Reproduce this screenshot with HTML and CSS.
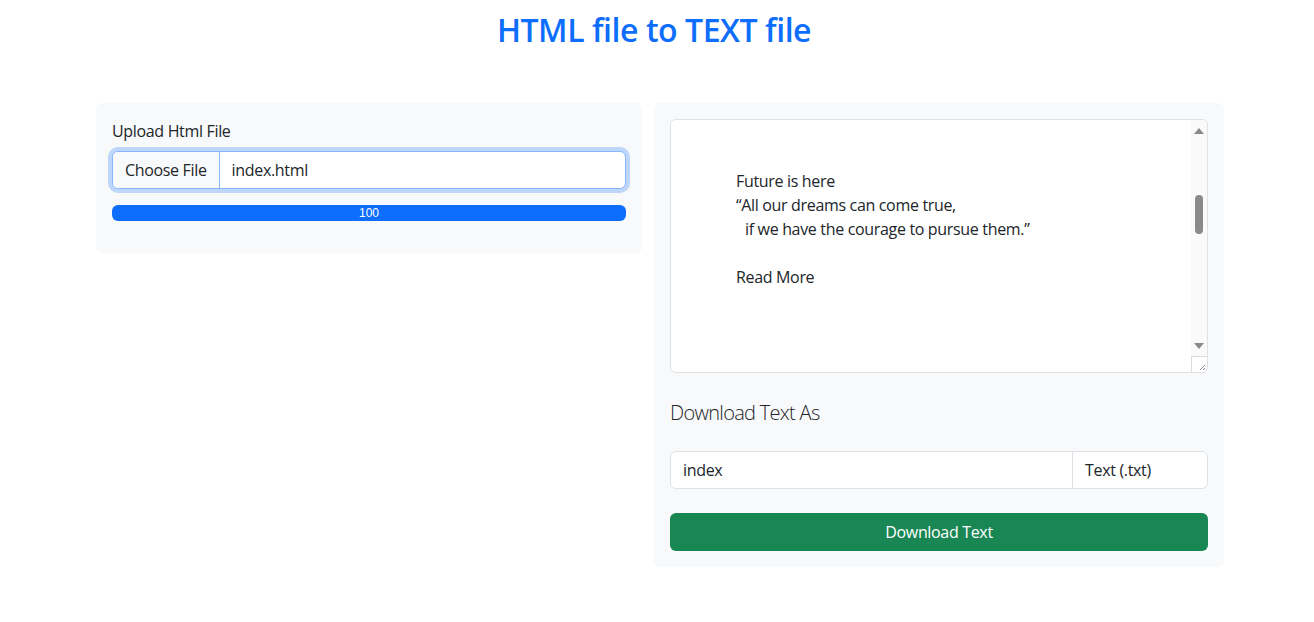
FILE: index.html
```html
<!DOCTYPE html>
<html lang="en">
<head>
<meta charset="utf-8">
<title>HTML file to TEXT file</title>
<link rel="stylesheet" href="styles.css">
</head>
<body>
<h2 class="title">HTML file to TEXT file</h2>
<main class="row">
  <section class="card card-left">
    <label class="label">Upload Html File</label>
    <div class="file-input">
      <span class="file-btn">Choose File</span>
      <span class="file-name">index.html</span>
    </div>
    <div class="progress"><div class="progress-bar">100</div></div>
  </section>
  <section class="card card-right">
    <div class="textarea">
      <div class="ta-content">
        <div class="line">Future is here</div>
        <div class="line">“All our dreams can come true,</div>
        <div class="line indent">if we have the courage to pursue them.”</div>
        <div class="line">&nbsp;</div>
        <div class="line">Read More</div>
      </div>
      <div class="scrollbar">
        <span class="arrow up"></span>
        <span class="thumb"></span>
        <span class="arrow down"></span>
      </div>
      <div class="resizer">
        <svg width="15" height="15" viewBox="0 0 15 15"><path d="M13 8 L8 13 M13 11 L11 13" stroke="#8a8a8a" stroke-width="1" fill="none"/></svg>
      </div>
    </div>
    <h5 class="subhead">Download Text As</h5>
    <div class="input-group">
      <span class="name-input">index</span>
      <span class="type-select">Text (.txt)</span>
    </div>
    <button class="btn-download">Download Text</button>
  </section>
</main>
</body>
</html>
```

FILE: styles.css
```css
* { box-sizing: border-box; }
body {
  margin: 0;
  background: #fff;
  color: #212529;
  font-family: "Open Sans", "Noto Sans", sans-serif;
  font-size: 16px;
  line-height: 24px;
  letter-spacing: -0.33px;
}
.title {
  margin: 11px 0 0;
  text-align: center;
  font-size: 32px;
  line-height: 38px;
  font-weight: 600;
  color: #0d6efd;
  padding-right: 6px;
  letter-spacing: -0.45px;
}
.row {
  display: flex;
  align-items: flex-start;
  gap: 12px;
  margin: 54px 0 0 96px;
}
.card {
  background: #f8f9fa;
  border-radius: 6px;
  padding: 16px;
}
.card-left { width: 546px; padding-bottom: 32px; }
.card-right { width: 570px; }
.label { display: block; margin-bottom: 8px; }
.file-input {
  display: flex;
  height: 38px;
  background: #fff;
  border: 1px solid #86b7fe;
  border-radius: 6px;
  box-shadow: 0 0 0 4px rgba(13, 110, 253, 0.25);
  overflow: hidden;
}
.file-btn {
  padding: 6px 12px;
  background: #f8f9fa;
  border-right: 1px solid #86b7fe;
  line-height: 24px;
}
.file-name { padding: 6px 12px; line-height: 24px; }
.progress {
  margin-top: 16px;
  height: 16px;
  border-radius: 6px;
  background: #e9ecef;
  overflow: hidden;
}
.progress-bar {
  height: 100%;
  width: 100%;
  background: #0d6efd;
  color: #fff;
  font-size: 12px;
  line-height: 16px;
  text-align: center;
  letter-spacing: 0;
  font-family: "Liberation Sans", Arial, sans-serif;
}
.textarea {
  position: relative;
  height: 254px;
  background: #fff;
  border: 1px solid #dee2e6;
  border-radius: 6px;
  overflow: hidden;
}
.ta-content { padding: 49px 12px 0 65px; }
.line { white-space: pre; }
.indent { padding-left: 9px; }
.scrollbar {
  position: absolute;
  top: 0;
  right: 0;
  width: 16px;
  height: 237px;
  background: #fafafa;
}
.arrow {
  position: absolute;
  left: 3px;
  width: 0;
  height: 0;
  border-left: 5px solid transparent;
  border-right: 5px solid transparent;
}
.arrow.up { top: 8px; border-bottom: 6px solid #8a8a8a; }
.arrow.down { bottom: 8px; border-top: 6px solid #8a8a8a; }
.thumb {
  position: absolute;
  left: 4px;
  top: 75px;
  width: 8px;
  height: 39px;
  border-radius: 4px;
  background: #8a8a8a;
}
.resizer {
  position: absolute;
  right: 0;
  bottom: 0;
  width: 16px;
  height: 16px;
  background: #fff;
  border-top: 1px solid #dcdcdc;
  border-left: 1px solid #dcdcdc;
}
.resizer svg { display: block; }
.subhead {
  margin: 28px 0 26px;
  font-size: 20px;
  line-height: 24px;
  font-weight: 300;
  letter-spacing: -0.7px;
}
.input-group {
  display: flex;
  height: 38px;
  background: #fff;
  border: 1px solid #dee2e6;
  border-radius: 6px;
}
.name-input { flex: 1; padding: 6px 12px; }
.type-select {
  width: 135px;
  padding: 6px 12px;
  border-left: 1px solid #dee2e6;
}
.btn-download {
  display: block;
  width: 100%;
  height: 38px;
  margin-top: 24px;
  border: 0;
  border-radius: 6px;
  background: #198754;
  color: #fff;
  font: inherit;
  font-size: 16px;
  letter-spacing: -0.33px;
}
```
